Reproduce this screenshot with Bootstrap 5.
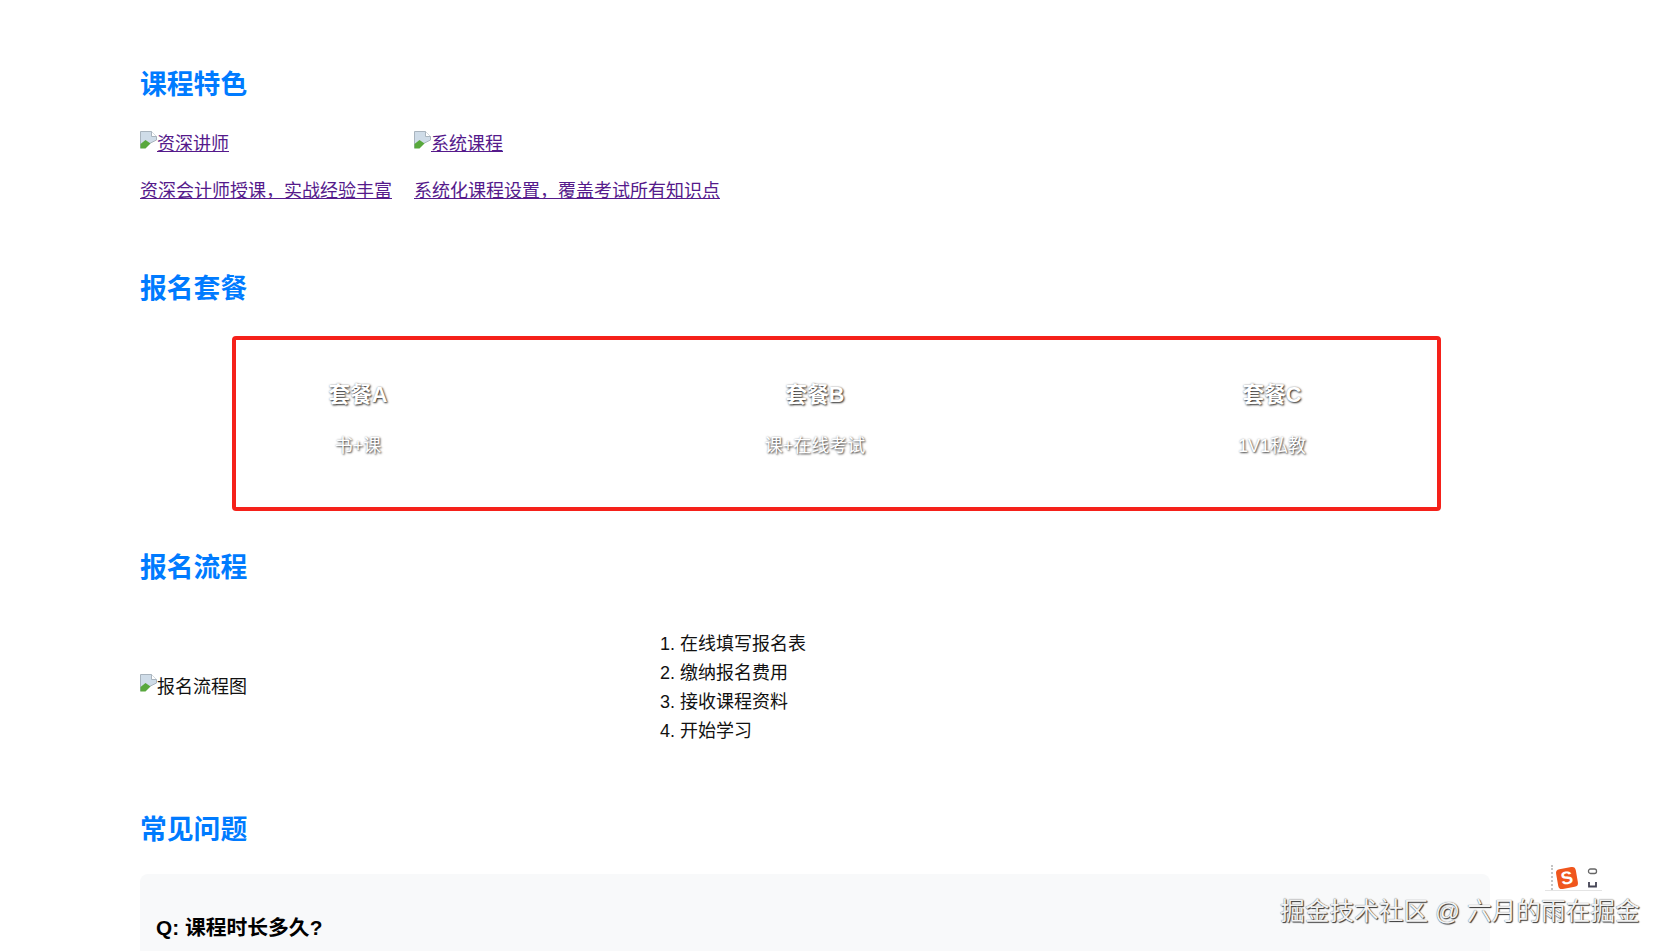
<!DOCTYPE html>
<html lang="zh-CN">
<head>
<meta charset="utf-8">
<title>课程介绍</title>
<link href="https://cdn.jsdelivr.net/npm/bootstrap@5.3.0/dist/css/bootstrap.min.css" rel="stylesheet">
<style>
html,body{height:100vh;overflow:hidden;background:#fff}
body{font-family:"Liberation Sans","Noto Sans CJK SC",sans-serif;font-size:18px;line-height:1.6;color:#111}
.page-shell{padding:65px 176px 0 140px;position:relative}
.sec-title{font-size:26.8px;line-height:40px;font-weight:700;color:#007bff;margin:0}
.feat-row{gap:22px;margin-top:25px}
.feat-link{color:#551a8b;text-decoration:underline;display:block}
.feat-link.tail{margin-top:18px}
.broken-ico{width:17px;height:18px;vertical-align:1px}
.feat-block{margin-bottom:63px}
.plan-zone{position:relative;margin:16px -10.5px 0;height:223px}
.plan-cell{text-align:center;color:#fff;padding-top:52px}
.plan-name{font-size:21.6px;line-height:36px;font-weight:700;margin:0;text-shadow:1px 1px 2px rgba(0,0,0,.8),0 0 2px rgba(0,0,0,.35)}
.plan-sub{margin:19px 0 0;line-height:29px;text-shadow:1px 1px 2px rgba(0,0,0,.7),0 0 2px rgba(0,0,0,.3)}
.red-frame{position:absolute;left:102px;top:11px;width:1209px;height:175px;border:4px solid #f5211a;border-radius:4px}
.flow-wrap{margin-top:5px;height:190px}
.flow-left{width:500px}
.flow-list{margin:0;padding-left:40px}
.flow-list li{line-height:29px}
.faq-title{margin-top:27px}
.faq-box{margin-top:24px;height:300px;background:#f8f9fa;border-radius:8px;padding:37px 16px}
.faq-q{font-size:20.8px;line-height:34px;font-weight:700;margin:0;color:#000}
.mark-text{position:absolute;left:1280px;top:893px;font-size:24.7px;line-height:38px;white-space:nowrap;color:#f2f2f2;text-shadow:1px 1px 1px #333,0 0 1px #555}
.ime-bar{position:absolute;left:1545px;top:864px;width:57px;height:27px;border-bottom:1px solid #e4e4e4}
.ime-dots{position:absolute;left:6px;top:1px;height:25px;border-left:2px dotted #c4c4c4}
.ime-s{position:absolute;left:12px;top:4px;width:20px;height:20px;border-radius:4px;background:#f0561d;color:#fff;font-size:18px;font-weight:700;line-height:20px;text-align:center;transform:rotate(-10deg)}
.ime-side{position:absolute;left:42px;top:4px}
</style>
</head>
<body>
<div class="page-shell">
  <h2 class="sec-title">课程特色</h2>
  <div class="d-flex feat-row feat-block">
    <div>
      <a class="feat-link" href="#"><svg class="broken-ico" viewBox="0 0 17 18"><path d="M.5.500h11l5 5V9L.5 17z" fill="#cfdce8" stroke="#a9b4be"/><path d="M11.500.500v5h5" fill="#fff" stroke="#a9b4be"/><path d="M.5 17.500V13l5-4 5 3.500-5 5z" fill="#58a83c"/></svg>资深讲师</a>
      <a class="feat-link tail" href="#">资深会计师授课，实战经验丰富</a>
    </div>
    <div>
      <a class="feat-link" href="#"><svg class="broken-ico" viewBox="0 0 17 18"><path d="M.5.500h11l5 5V9L.5 17z" fill="#cfdce8" stroke="#a9b4be"/><path d="M11.500.500v5h5" fill="#fff" stroke="#a9b4be"/><path d="M.5 17.500V13l5-4 5 3.500-5 5z" fill="#58a83c"/></svg>系统课程</a>
      <a class="feat-link tail" href="#">系统化课程设置，覆盖考试所有知识点</a>
    </div>
  </div>
  <h2 class="sec-title">报名套餐</h2>
  <div class="plan-zone">
    <div class="row g-0">
      <div class="col-4 plan-cell"><h3 class="plan-name">套餐A</h3><p class="plan-sub">书+课</p></div>
      <div class="col-4 plan-cell"><h3 class="plan-name">套餐B</h3><p class="plan-sub">课+在线考试</p></div>
      <div class="col-4 plan-cell"><h3 class="plan-name">套餐C</h3><p class="plan-sub">1V1私教</p></div>
    </div>
    <div class="red-frame"></div>
  </div>
  <h2 class="sec-title">报名流程</h2>
  <div class="d-flex align-items-center flow-wrap">
    <div class="flow-left"><svg class="broken-ico" viewBox="0 0 17 18"><path d="M.5.500h11l5 5V9L.5 17z" fill="#cfdce8" stroke="#a9b4be"/><path d="M11.500.500v5h5" fill="#fff" stroke="#a9b4be"/><path d="M.5 17.500V13l5-4 5 3.500-5 5z" fill="#58a83c"/></svg>报名流程图</div>
    <ol class="flow-list">
      <li>在线填写报名表</li>
      <li>缴纳报名费用</li>
      <li>接收课程资料</li>
      <li>开始学习</li>
    </ol>
  </div>
  <h2 class="sec-title faq-title">常见问题</h2>
  <div class="faq-box">
    <p class="faq-q">Q: 课程时长多久?</p>
  </div>
</div>
<div class="ime-bar">
  <div class="ime-dots"></div>
  <div class="ime-s">S</div>
  <svg class="ime-side" width="12" height="20" viewBox="0 0 12 20"><rect x="1.500" y="1" width="8" height="4.500" rx="2" fill="none" stroke="#666" stroke-width="1.300"/><path d="M2 14v4.500h7V14" fill="none" stroke="#445" stroke-width="1.800"/></svg>
</div>
<div class="mark-text">掘金技术社区 @ 六月的雨在掘金</div>
<script src="https://cdn.jsdelivr.net/npm/bootstrap@5.3.0/dist/js/bootstrap.bundle.min.js"></script>
</body>
</html>
